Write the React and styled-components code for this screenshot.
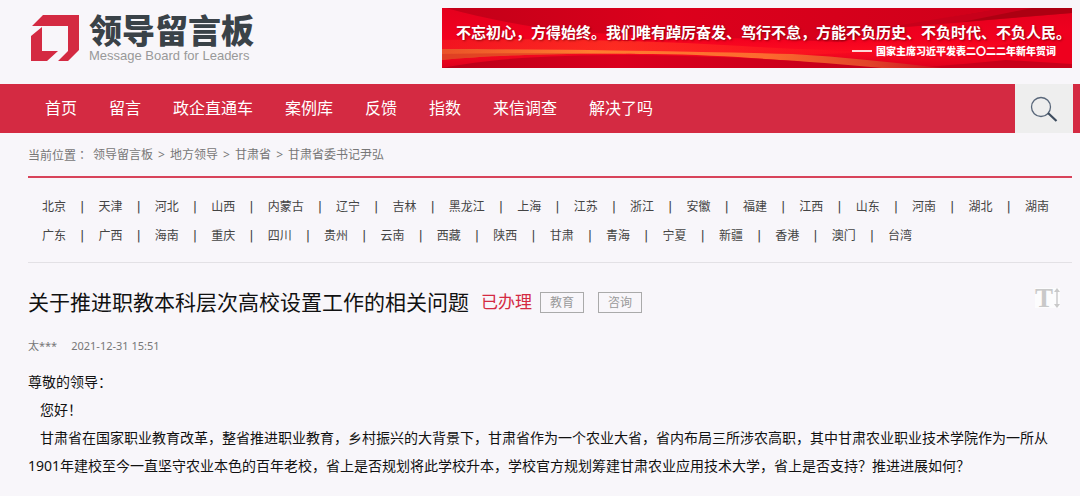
import React from "react";
import styled, { createGlobalStyle } from "styled-components";

const menus = [
  "首页",
  "留言",
  "政企直通车",
  "案例库",
  "反馈",
  "指数",
  "来信调查",
  "解决了吗",
];

const paths = ["领导留言板", "地方领导", "甘肃省", "甘肃省委书记尹弘"];

const regionRows = [
  [
    "北京",
    "天津",
    "河北",
    "山西",
    "内蒙古",
    "辽宁",
    "吉林",
    "黑龙江",
    "上海",
    "江苏",
    "浙江",
    "安徽",
    "福建",
    "江西",
    "山东",
    "河南",
    "湖北",
    "湖南",
  ],
  [
    "广东",
    "广西",
    "海南",
    "重庆",
    "四川",
    "贵州",
    "云南",
    "西藏",
    "陕西",
    "甘肃",
    "青海",
    "宁夏",
    "新疆",
    "香港",
    "澳门",
    "台湾",
  ],
];

const tags = ["教育", "咨询"];

const LogoMark = () => (
  <svg width="48" height="47" viewBox="0 0 48 47" aria-hidden="true">
    <path
      fill="#d42a42"
      d="M12 0H48V35L37 46H27L37 36V11H1ZM0 21L11 12V36H27L16 46H0Z"
    />
  </svg>
);

const BannerArt = () => (
  <Art viewBox="0 0 630 60" preserveAspectRatio="none" aria-hidden="true">
    <defs>
      <linearGradient id="base" x1="0" y1="0" x2="0" y2="1">
        <stop offset="0" stopColor="#e4001d" />
        <stop offset="0.5" stopColor="#f2001f" />
        <stop offset="0.7" stopColor="#fb0a20" />
        <stop offset="1" stopColor="#dc001d" />
      </linearGradient>
      <linearGradient id="dark" x1="0" y1="0" x2="1" y2="0">
        <stop offset="0" stopColor="#c20018" />
        <stop offset="0.4" stopColor="#dc001c" />
        <stop offset="1" stopColor="#d0001a" />
      </linearGradient>
      <linearGradient id="glow" x1="0" y1="0" x2="1" y2="0">
        <stop offset="0" stopColor="#f01a20" />
        <stop offset="0.4" stopColor="#ff3a22" />
        <stop offset="1" stopColor="#fb0a20" />
      </linearGradient>
      <linearGradient id="gold" x1="0" y1="0" x2="1" y2="0">
        <stop offset="0" stopColor="#ea5328" />
        <stop offset="0.3" stopColor="#ff7d30" />
        <stop offset="0.65" stopColor="#fc6a2e" />
        <stop offset="0.85" stopColor="#e2452a" />
        <stop offset="1" stopColor="#cc1020" />
      </linearGradient>
      <linearGradient id="under" x1="0" y1="0" x2="1" y2="0">
        <stop offset="0" stopColor="#b80018" />
        <stop offset="0.4" stopColor="#da001e" />
        <stop offset="1" stopColor="#c4001a" />
      </linearGradient>
    </defs>
    <rect width="630" height="60" fill="url(#base)" />
    <path fill="url(#dark)" d="M4 0H560C500 10 440 22 400 34C300 30 200 28 130 24C80 18 40 10 4 0Z" />
    <path
      fill="url(#glow)"
      opacity="0.7"
      d="M0 32C100 30 200 32 300 38C350 41 390 42 430 44L360 47C240 43 110 41 0 41Z"
    />
    <path fill="#c8001a" d="M430 22L560 0H630V5Z" />
    <path fill="#ad0012" d="M520 14L590 0H630V5Z" />
    <path fill="#c8001a" d="M470 60C530 56 590 50 630 44V60Z" />
    <path fill="#ee001e" d="M500 48L630 24V56Z" />
    <path
      fill="url(#gold)"
      d="M0 41C110 41 240 43 350 46C400 49 450 54 500 60H430C370 55 300 47 210 46C120 45 50 47 0 52Z"
    />
    <path
      fill="#d9341f"
      opacity="0.6"
      d="M0 46C70 45 140 45 210 46C120 45 50 47 0 52Z"
    />
    <path
      fill="url(#under)"
      d="M0 60C50 50 110 47 190 47C290 48 370 53 440 60Z"
    />
  </Art>
);

const SearchIcon = () => (
  <svg width="28" height="28" viewBox="0 0 28 28" fill="none" aria-hidden="true">
    <circle cx="11" cy="12" r="9.5" stroke="#59677a" strokeWidth="1.3" />
    <path d="M18 18L26.5 26" stroke="#3d4c5e" strokeWidth="2.2" />
  </svg>
);

const HeightArrow = () => (
  <svg width="6" height="20" viewBox="0 0 6 20" aria-hidden="true">
    <path d="M3 1V19" stroke="#c9c9c9" strokeWidth="1.4" />
    <path fill="#c9c9c9" d="M3 0L6 4H0ZM3 20L0 16H6Z" />
  </svg>
);

const App = () => {
  return (
    <>
      <GlobalStyle />
      <Header>
        <Logo href="#">
          <LogoMark />
          <LogoText>
            <LogoName>领导留言板</LogoName>
            <LogoSub>Message Board for Leaders</LogoSub>
          </LogoText>
        </Logo>
        <Banner href="#">
          <BannerArt />
          <Slogan>
            不忘初心，方得始终。我们唯有踔厉奋发、笃行不怠，方能不负历史、不负时代、不负人民。
          </Slogan>
          <Source>
            <Dash />
            国家主席习近平发表二〇二二年新年贺词
          </Source>
        </Banner>
      </Header>

      <Nav>
        <Menu>
          {menus.map((menu) => (
            <li key={menu}>
              <MenuLink href="#">{menu}</MenuLink>
            </li>
          ))}
        </Menu>
        <SearchButton type="button" aria-label="搜索">
          <SearchIcon />
        </SearchButton>
      </Nav>

      <Content>
        <Breadcrumb>
          <PathLabel>当前位置：</PathLabel>
          {paths.map((path, i) => (
            <React.Fragment key={path}>
              {i > 0 && <Arrow>&gt;</Arrow>}
              <PathLink href="#">{path}</PathLink>
            </React.Fragment>
          ))}
        </Breadcrumb>

        <Regions>
          {regionRows.map((row) => (
            <RegionRow key={row[0]}>
              {row.map((region) => (
                <RegionItem key={region}>
                  <RegionLink href="#">{region}</RegionLink>
                </RegionItem>
              ))}
            </RegionRow>
          ))}
        </Regions>

        <article>
          <TitleRow>
            <Title>关于推进职教本科层次高校设置工作的相关问题</Title>
            <Status>已办理</Status>
            <Tags>
              {tags.map((tag) => (
                <Tag key={tag}>{tag}</Tag>
              ))}
            </Tags>
            <FontSizeButton type="button">
              T
              <HeightArrow />
            </FontSizeButton>
          </TitleRow>
          <Meta>
            <span>太***</span>
            <time>2021-12-31 15:51</time>
          </Meta>
          <Paragraph>尊敬的领导：</Paragraph>
          <Paragraph $indent>您好！</Paragraph>
          <Paragraph $indent>
            甘肃省在国家职业教育改革，整省推进职业教育，乡村振兴的大背景下，甘肃省作为一个农业大省，省内布局三所涉农高职，其中甘肃农业职业技术学院作为一所从1901年建校至今一直坚守农业本色的百年老校，省上是否规划将此学校升本，学校官方规划筹建甘肃农业应用技术大学，省上是否支持？推进进展如何？
          </Paragraph>
        </article>
      </Content>
    </>
  );
};

export default App;

const GlobalStyle = createGlobalStyle`
  * {
    box-sizing: border-box;
  }
  body {
    margin: 0;
    background-color: #f8f6fa;
    color: #111;
    font-family: "Noto Sans", "Noto Sans CJK SC", sans-serif;
    font-size: 14px;
  }
  a {
    color: inherit;
    text-decoration: none;
  }
  ul {
    margin: 0;
    padding: 0;
    list-style: none;
  }
`;

const Header = styled.header`
  display: flex;
  justify-content: space-between;
  align-items: flex-start;
  gap: 32px;
  padding: 8px 8px 16px 28px;
`;

const Logo = styled.a`
  display: flex;
  flex-shrink: 0;
  gap: 10px;
  padding: 7px 0 0 3px;
`;

const LogoText = styled.div`
  display: flex;
  flex-direction: column;
`;

const LogoName = styled.span`
  color: #3a4248;
  font-size: 33px;
  font-weight: 900;
  line-height: 32px;
`;

const LogoSub = styled.span`
  padding-top: 2px;
  color: #999;
  font-family: "Liberation Sans", sans-serif;
  font-size: 13px;
  line-height: 14px;
`;

const Banner = styled.a`
  position: relative;
  flex: 0 1 630px;
  display: flex;
  flex-direction: column;
  height: 60px;
  padding: 12px 0 0 14px;
  overflow: hidden;
  color: #fff;
  white-space: nowrap;
`;

const Art = styled.svg`
  position: absolute;
  inset: 0;
  width: 100%;
  height: 100%;
`;

const Slogan = styled.strong`
  position: relative;
  font-size: 15px;
  font-weight: 700;
  line-height: 24px;
  text-shadow: 1px 1px 2px rgba(90, 0, 0, 0.6);
`;

const Source = styled.span`
  position: relative;
  display: flex;
  align-items: center;
  justify-content: flex-end;
  gap: 4px;
  padding-right: 16px;
  font-size: 10px;
  font-weight: 900;
  line-height: 14px;
`;

const Dash = styled.i`
  width: 20px;
  height: 2px;
  background-color: #ffd5d5;
`;

const Nav = styled.nav`
  display: flex;
  justify-content: space-between;
  padding: 0 7px 0 45px;
  background-color: #d42a42;
`;

const Menu = styled.ul`
  display: flex;
  gap: 32px;
`;

const MenuLink = styled.a`
  color: #fff;
  font-size: 16px;
  line-height: 49px;
`;

const SearchButton = styled.button`
  display: flex;
  align-items: center;
  justify-content: center;
  width: 58px;
  padding: 0;
  border: none;
  background-color: #eee;
  cursor: pointer;
`;

const Content = styled.main`
  padding: 0 8px 16px 28px;
`;

const Breadcrumb = styled.div`
  display: flex;
  height: 45px;
  border-bottom: 2px solid #d8435a;
  color: #777;
  font-size: 12px;
  line-height: 44px;
`;

const PathLabel = styled.span`
  margin-right: 5px;
  font-family: "Noto Sans CJK TC", sans-serif;
`;

const PathLink = styled.a`
  &:hover {
    color: #d42a42;
  }
`;

const Arrow = styled.span`
  width: 17px;
  text-align: center;
`;

const Regions = styled.div`
  padding: 14px 14px 12px;
  border-bottom: 1px solid #e3e1e5;
`;

const RegionRow = styled.ul`
  display: flex;
  flex-wrap: wrap;
  color: #444;
  font-size: 12px;
  line-height: 29px;
`;

const RegionItem = styled.li`
  display: flex;

  &:not(:last-child)::after {
    content: "|";
    padding: 0 14px;
    font-family: "DejaVu Sans", sans-serif;
    font-size: 13px;
  }
`;

const RegionLink = styled.a`
  &:hover {
    color: #d42a42;
  }
`;

const TitleRow = styled.div`
  display: flex;
  align-items: center;
  padding-top: 23px;
`;

const Title = styled.h1`
  margin: 0 12px 0 0;
  font-size: 21px;
  font-weight: 400;
  line-height: 32px;
`;

const Status = styled.span`
  margin-right: 8px;
  color: #d42a42;
  font-size: 17px;
  line-height: 32px;
`;

const Tags = styled.div`
  display: flex;
  gap: 14px;
`;

const Tag = styled.span`
  padding: 0 9px;
  border: 1px solid #aaa;
  color: #999;
  font-size: 12px;
  line-height: 19px;
`;

const FontSizeButton = styled.button`
  display: flex;
  align-items: center;
  gap: 1px;
  height: 20px;
  margin: 0 12px 8px auto;
  padding: 0;
  border: none;
  background-color: #fcfcfd;
  color: #c9c9c9;
  font-family: "Liberation Serif", serif;
  font-size: 27px;
  font-weight: 700;
  line-height: 20px;
  cursor: pointer;
`;

const Meta = styled.div`
  display: flex;
  gap: 14px;
  padding: 16px 0 10px;
  color: #777;
  font-size: 11px;
  line-height: 24px;
`;

const Paragraph = styled.p`
  margin: 0;
  font-size: 14px;
  line-height: 28px;
  text-indent: ${(props) => (props.$indent ? "12px" : "0")};
`;
